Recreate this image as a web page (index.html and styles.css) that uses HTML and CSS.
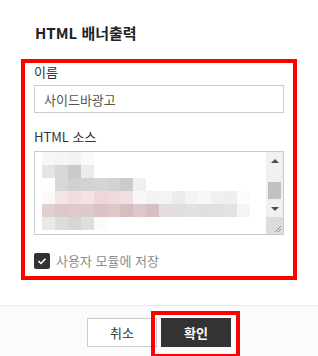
FILE: index.html
```html
<!DOCTYPE html>
<html lang="ko">

<head>
  <meta charset="UTF-8">
  <meta name="viewport" content="width=device-width, initial-scale=1.0">
  <title>HTML 배너출력</title>
  <link rel="stylesheet" href="styles.css">
</head>

<body>
  <div class="dialog">
    <h2 class="title">HTML 배너출력</h2>

    <div class="form mark">
      <label class="label">이름</label>
      <input class="input" type="text" value="사이드바광고">

      <label class="label label-src">HTML 소스</label>
      <div class="source">
        <div id="mosaic" class="mosaic"></div>
        <div class="scroll">
          <span class="arrow arrow-up"></span>
          <span class="track"><span class="thumb"></span></span>
          <span class="arrow arrow-down"></span>
          <span class="corner">
            <svg width="17" height="17" viewBox="0 0 17 17">
              <path d="M15 9 L9 15 M15 12 L12 15" stroke="#888" stroke-width="1" fill="none" />
            </svg>
          </span>
        </div>
      </div>

      <div class="check">
        <span class="box">
          <svg width="16" height="16" viewBox="0 0 16 16">
            <path d="M4.5 8.2 L7 10.5 L11.5 5.8" stroke="#fff" stroke-width="1.6" fill="none" />
          </svg>
        </span>
        사용자 모듈에 저장
      </div>
    </div>

    <div class="footer">
      <button class="btn">취소</button>
      <span class="mark-btn"><button class="btn btn-primary">확인</button></span>
    </div>
  </div>

  <script>
    // 블러 처리된 소스 미리보기 (13px 블록)
    let rows = [
      ['#f7f7f7', '#f4f5f4', '#f2f4f3', '#fafafa'],
      ['#e5e4e3', '#d5d8d9', '#c8cbca', '#ececec'],
      ['#fff', '#d6d8d8', '#cfd0d1', '#d1d2d2', '#d4d5d5', '#d2d2d3', '#cbcbcc', '#eff0f2'],
      ['#fafafa', '#f4e4e6', '#f2dcdf', '#f6e1e3', '#efd6da', '#f0d9dc', '#f2dee0', '#f7f7f7',
        '#f3f3f3', '#f4f4f4', '#ececef', '#f4f4f4', '#f8f8f8', '#eff0f0', '#eeefef', '#fcfcfc'],
      ['#e0cfcf', '#dcc8ca', '#dec9cb', '#dcc9ca', '#d9c3c6', '#dcc7c9', '#d5bec0', '#dcc8ca',
        '#d6bfc2', '#e6dcdc', '#dedfe1', '#e4e0e0', '#dddfe2', '#e0e0e0', '#e2e2e2', '#f5f5f5'],
      ['#e9e9e8', '#dcdcdc', '#d5d6d5', '#dfdfdf', '#fbfbfb']
    ];

    let html = '';
    for (let r = 0; r < rows.length; r++) {
      for (let c = 0; c < 16; c++) {
        let color = rows[r][c] || 'transparent';
        html += '<span style="background:' + color + '"></span>';
      }
    }
    document.getElementById('mosaic').innerHTML = html;
  </script>
</body>

</html>
```

FILE: styles.css
```css
* {
  margin: 0;
  padding: 0;
  box-sizing: border-box;
}

body {
  background: #fff;
  font-family: "Noto Sans CJK KR", "Noto Sans", sans-serif;
  color: #333;
  overflow: hidden;
}

.dialog {
  width: 318px;
}

.title {
  margin: 22px 35px 15px;
  font-size: 15px;
  line-height: 22px;
  font-weight: bold;
  color: #222;
}

.mark {
  border: 4px solid #ff0000;
}

.form {
  margin: 0 21px;
  padding: 0 9px 7px;
}

.label {
  display: block;
  font-size: 13px;
  line-height: 18px;
  color: #333;
}

.label-src {
  margin-top: 15px;
}

.input {
  display: block;
  width: 250px;
  height: 28px;
  margin-top: 4px;
  padding: 0 9px;
  border: 1px solid #c9cdd3;
  font-family: "Noto Sans CJK KR", "Noto Sans", sans-serif;
  font-size: 13px;
  color: #555;
  outline: none;
}

.source {
  display: flex;
  width: 250px;
  height: 84px;
  margin-top: 5px;
  border: 1px solid #c6cbd1;
  background: #fff;
  overflow: hidden;
}

.mosaic {
  flex: 1;
  display: grid;
  grid-template-columns: repeat(16, 13px);
  grid-auto-rows: 13px;
  padding: 0 0 0 7px;
  align-content: start;
}

.scroll {
  display: flex;
  flex-direction: column;
  width: 17px;
  background: #f0f0f0;
}

.arrow {
  display: flex;
  height: 17px;
  align-items: center;
  justify-content: center;
}

.arrow::before {
  content: "";
  border-left: 4px solid transparent;
  border-right: 4px solid transparent;
}

.arrow-up::before {
  border-bottom: 4px solid #505050;
}

.arrow-down::before {
  border-top: 4px solid #505050;
}

.track {
  display: block;
  height: 31px;
}

.thumb {
  display: block;
  height: 17px;
  margin: 13px 2px 0;
  background: #c1c1c1;
}

.corner {
  display: block;
  height: 17px;
  background: #dcdcdc;
}

.corner svg {
  display: block;
}

.check {
  display: flex;
  align-items: center;
  gap: 6px;
  margin-top: 18px;
  font-size: 13px;
  line-height: 16px;
  color: #8c8c8c;
}

.box {
  width: 16px;
  height: 16px;
  border-radius: 2px;
  background: #333;
}

.box svg {
  display: block;
}

.footer {
  display: flex;
  justify-content: center;
  align-items: flex-start;
  gap: 4px;
  height: 60px;
  margin-top: 25px;
  padding-top: 12px;
  border-top: 1px solid #e9ebee;
  background: #fafbfc;
}

.btn {
  width: 70px;
  height: 29px;
  border: 1px solid #cccccc;
  background: #fff;
  font-family: "Noto Sans CJK KR", "Noto Sans", sans-serif;
  font-size: 13px;
  color: #333;
  cursor: pointer;
}

.mark-btn {
  display: block;
  margin: -7px -9px -7px -10px;
  padding: 3px 5px 7px 6px;
  border: 4px solid #ff0000;
}

.btn-primary {
  display: block;
  border-color: #333;
  background: #333;
  color: #fff;
  font-weight: bold;
}
```
